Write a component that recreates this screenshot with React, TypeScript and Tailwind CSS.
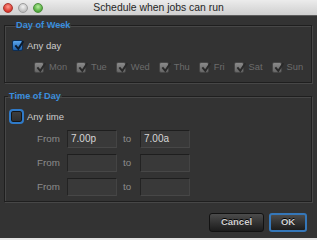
import React from 'react';

const days = ['Mon', 'Tue', 'Wed', 'Thu', 'Fri', 'Sat', 'Sun'];

const Check = ({ color }: { color: string }) => (
  <svg viewBox="0 0 10 10" className="w-[10px] h-[10px] absolute left-[1px] top-0" fill="none">
    <path d="M2 5.2 L4.3 7.8 L8.8 1" stroke={color} strokeWidth="2" strokeLinecap="square" />
  </svg>
);

const DayBox = ({ label }: { label: string }) => (
  <div className="flex items-center gap-[5px]">
    <div className="relative w-[10px] h-[11px] rounded-[2px] bg-gradient-to-b from-[#8a8a8a] to-[#676767] border border-[#474747]">
      <Check color="#2a2a2a" />
    </div>
    <span className="text-[#6c6c6c] text-[9.3px] leading-[11px]">{label}</span>
  </div>
);

const Field = ({ value }: { value?: string }) => (
  <div className="w-[50px] h-[18px] bg-[#393939] border border-t-[#1e1e1e] border-l-[#232323] border-r-[#444] border-b-[#474747] pl-[3px] text-[10px] leading-[16px] text-[#d6d6d6]">
    {value}
  </div>
);

const TimeRow = ({ from, to }: { from?: string; to?: string }) => (
  <div className="flex items-center pl-[32px]">
    <span className="w-[23px] text-[9.8px] text-[#8c8c8c]">From</span>
    <div className="ml-[7px]">
      <Field value={from} />
    </div>
    <span className="ml-[6px] w-[17px] text-[9.8px] text-[#8c8c8c]">to</span>
    <Field value={to} />
  </div>
);

const Legend = ({ children }: { children: React.ReactNode }) => (
  <legend className="ml-[3px] px-[1px] text-[9.2px] leading-[12px] font-bold text-[#3a8ede]">{children}</legend>
);

export default function App() {
  return (
    <div className="w-[317px] h-[240px] flex flex-col bg-[#333333] font-['Liberation_Sans',Arial,sans-serif] overflow-hidden">
      <div className="h-[16px] grid grid-cols-[1fr_auto_1fr] items-center bg-gradient-to-b from-[#ececec] to-[#cfcfcf] border-b border-[#5c5c5c]">
        <div className="flex items-center gap-[5px] pl-[3px]">
          <div className="w-[10px] h-[10px] rounded-full bg-[radial-gradient(circle_at_50%_35%,#ff9a8e,#d8342a_70%)] border border-[#a8382f]" />
          <div className="w-[10px] h-[10px] rounded-full bg-[radial-gradient(circle_at_50%_35%,#f2f2f2,#bdbdbd_70%)] border border-[#9d9d9d]" />
          <div className="w-[10px] h-[10px] rounded-full bg-[radial-gradient(circle_at_50%_35%,#b6ee9c,#4ea83a_70%)] border border-[#4d8d3c]" />
        </div>
        <span className="text-[10.4px] leading-[15px] text-[#262626]">Schedule when jobs can run</span>
        <div />
      </div>

      <div className="flex-1 flex flex-col">
        <fieldset className="mt-[3px] ml-[4px] w-[308px] border border-[#1f1f1f] shadow-[inset_1px_1px_0_#474747,1px_1px_0_#474747] pl-[7px] pt-[9px] pb-[9px]">
          <Legend>Day of Week</Legend>
          <div className="flex items-center gap-[4px]">
            <div className="relative w-[11px] h-[11px] rounded-[2px] bg-gradient-to-b from-[#5aa6ee] to-[#1c5ea8] border border-[#0d2f57]">
              <Check color="#0c1b2c" />
            </div>
            <span className="text-[9.5px] leading-[11px] text-[#cdcdcd]">Any day</span>
          </div>
          <div className="flex items-center gap-[9px] pl-[22px] mt-[11px]">
            {days.map((d) => (
              <DayBox key={d} label={d} />
            ))}
          </div>
        </fieldset>

        <fieldset className="mt-[7px] ml-[4px] w-[308px] border border-[#1f1f1f] shadow-[inset_1px_1px_0_#474747,1px_1px_0_#474747] pt-[9px] pb-[5px]">
          <Legend>Time of Day</Legend>
          <div className="flex items-center gap-[5px] pl-[6px]">
            <div className="w-[11px] h-[11px] rounded-[2px] bg-gradient-to-b from-[#3e3e3e] to-[#2e2e2e] border border-[#151515] outline outline-2 outline-[#2f7ac8]" />
            <span className="text-[9.5px] leading-[11px] text-[#cdcdcd]">Any time</span>
          </div>
          <div className="flex flex-col gap-[6px] mt-[8px]">
            <TimeRow from="7.00p" to="7.00a" />
            <TimeRow />
            <TimeRow />
          </div>
        </fieldset>

        <div className="flex justify-end gap-[5px] pr-[10px] mt-[11px]">
          <button className="w-[55px] h-[19px] rounded-[3px] border border-[#121212] bg-gradient-to-b from-[#4c4c4c] to-[#1c1c1c] text-[9.5px] font-bold text-[#cfcfcf] [text-shadow:0_-1px_0_#000]">
            Cancel
          </button>
          <button className="w-[38px] h-[19px] rounded-[3px] border-2 border-[#3577b9] bg-gradient-to-b from-[#4c4c4c] to-[#1c1c1c] text-[9.5px] font-bold text-[#cfcfcf] [text-shadow:0_-1px_0_#000]">
            OK
          </button>
        </div>
      </div>

      <div className="h-[2px] bg-[#e6e6e6]" />
    </div>
  );
}
